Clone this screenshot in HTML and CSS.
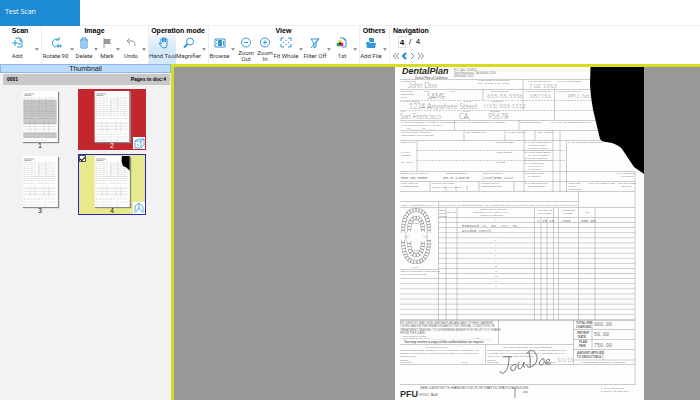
FILE: index.html
```html
<!DOCTYPE html>
<html lang="en">
<head>
<meta charset="utf-8">
<title>Test Scan</title>
<link rel="stylesheet" href="styles.css">
</head>
<body>
<svg class="defs" aria-hidden="true">
  <symbol id="sheet" viewBox="0 0 36 52">
    <path class="paper" d="M0 0h36v52H0z"/>
    <path class="ink-strong" d="M2 3h10M2 4.500h7"/>
    <path class="ink-dense" d="M1 7h33M1 9h14M17 9h16M1 11h33M1 13h12M16 13h18M1 15h33M1 17h20M23 17h10M1 19h33M1 23h33M1 25h33M1 28h12M16 28h17M1 44h20M23 44h10M1 47h18M22 47h12M1 50h25"/>
    <path class="ink-grid" d="M1 21h33M1 33h33M1 36h33M1 39h33M8 31v11M13 31v11M22 31v11M27 31v11M17 8v12M24 6v12"/>
  </symbol>
</svg>

<header class="titlebar"><h1 class="title">Test Scan</h1></header>

<nav class="toolbar" aria-label="Tools">
  <section class="group">
    <h2>Scan</h2>
    <div class="tools">
      <button class="tool w34"><svg viewBox="0 0 12 12"><path d="M1 6h6M4 3v6M5 2V1h4l2 2v7H6M9 1v3h2M7 7h3"/></svg><span>Add</span></button><button class="caret" aria-label="Add options"></button>
    </div>
  </section>
  <section class="group">
    <h2>Image</h2>
    <div class="tools">
      <button class="tool w27"><svg viewBox="0 0 12 12"><path d="M9 3A4 4 0 1 0 6 10M9 0v3H6M7 8h2v2H7zM10 8h1v2h-1z"/></svg><span>Rotate 90</span></button><button class="caret" aria-label="Rotate options"></button>
      <button class="tool w18"><svg viewBox="0 0 12 12"><path d="M2 3h8M4 3V1h4v2M3 3v8h6V3M5 4v6M7 4v6"/></svg><span>Delete</span></button><button class="caret" aria-label="Delete options"></button>
      <button class="tool w16 muted"><svg viewBox="0 0 12 12"><path class="fill" d="M3 2h7l-1 2 1 3H3z"/><path d="M3 1v10"/></svg><span>Mark</span></button><button class="caret" aria-label="Mark options"></button>
      <button class="tool w20 muted"><svg viewBox="0 0 12 12"><path d="M5 1L2 4l3 3M2 4h5q3 0 3 5"/></svg><span>Undo</span></button><button class="caret" aria-label="Undo options"></button>
    </div>
  </section>
  <section class="group">
    <h2>Operation mode</h2>
    <div class="tools">
      <button class="tool w27 selected"><svg viewBox="0 0 12 12"><path d="M4 7V2h1.500v3V1H7v4-4h1.500v4V2H10v6q0 3-3 3-2 0-3-2L2 6h1z"/></svg><span>Hand Tool</span></button>
      <button class="tool w25"><svg viewBox="0 0 12 12"><circle cx="7" cy="4.500" r="3.500"/><path class="bold" d="M4.500 7L1 10.500"/></svg><span>Magnifier</span></button><button class="caret" aria-label="Magnifier options"></button>
    </div>
  </section>
  <section class="group">
    <h2>View</h2>
    <div class="tools">
      <button class="tool w21"><svg viewBox="0 0 12 12"><path d="M1 2h10v8H1z"/><path class="fill" d="M4 3h4v6H4zM2 3h1v1H2zM2 6h1v1H2zM9 4h1v4H9z"/></svg><span>Browse</span></button><button class="caret" aria-label="Browse options"></button>
      <button class="tool w20"><svg viewBox="0 0 12 12"><circle cx="6" cy="5.500" r="4.500"/><path d="M4 5.500h4"/></svg><span>Zoom<br>Out</span></button>
      <button class="tool w18"><svg viewBox="0 0 12 12"><circle cx="6" cy="5.500" r="4.500"/><path d="M4 5.500h4M6 3.500v4"/></svg><span>Zoom<br>In</span></button>
      <button class="tool w24"><svg viewBox="0 0 12 12"><path d="M1 4V1h3M8 1h3v3M11 7v3H8M4 10H1V7M4 5.500H3M9 5.500H8M6 3v1M6 7v1"/></svg><span>Fit Whole</span></button><button class="caret" aria-label="Fit options"></button>
      <button class="tool w22"><svg viewBox="0 0 12 12"><path d="M2 2h8L7 6v4l-2 1V6zM10 1L2 11"/></svg><span>Filter Off</span></button><button class="caret" aria-label="Filter options"></button>
      <button class="tool w20"><svg viewBox="0 0 12 12"><path d="M4 1h4l2 2v7H6M8 1v2h2"/><circle class="dot-yellow" cx="4" cy="5" r="2"/><circle class="dot-cyan" cx="2.500" cy="7.500" r="2"/><circle class="dot-magenta" cx="5.500" cy="7.500" r="2"/><circle class="dot-black" cx="4" cy="6.500" r="1"/></svg><span>1st</span></button><button class="caret" aria-label="Page options"></button>
    </div>
  </section>
  <section class="group">
    <h2>Others</h2>
    <div class="tools">
      <button class="tool w22"><svg viewBox="0 0 12 12"><path class="fill" d="M1 5h3l1 1h6l-1 5H2z"/><path class="fill" d="M4 1h4l1 1v3H5L4 4z"/></svg><span>Add File</span></button><button class="caret" aria-label="Add file options"></button>
    </div>
  </section>
  <section class="group navigation">
    <h2>Navigation</h2>
    <div class="pager"><input aria-label="Page number" value="4"><span>/&nbsp; 4</span></div>
    <div class="steps">
      <button aria-label="First page"><svg viewBox="0 0 7 8"><path d="M3 1L0.500 4L3 7M6 1L3.500 4L6 7"/></svg></button>
      <button class="active" aria-label="Previous page"><svg viewBox="0 0 7 8"><path d="M5 1L2 4l3 3"/></svg></button>
      <button aria-label="Next page"><svg viewBox="0 0 7 8"><path d="M2 1l3 3-3 3"/></svg></button>
      <button aria-label="Last page"><svg viewBox="0 0 7 8"><path d="M1 1l2.500 3L1 7M4 1l2.500 3L4 7"/></svg></button>
    </div>
  </section>
</nav>

<main class="workspace">
  <aside class="thumbnails">
    <h2 class="panel-title">Thumbnail</h2>
    <div class="doc-head"><span>0001</span><span>Pages in doc:4</span></div>
    <div class="thumb-grid">
      <figure class="thumb">
        <svg class="mini dark" viewBox="0 0 36 52"><use href="#sheet"/><path class="shade" d="M1 9h34v25H1zM1 42h34v6H1z"/></svg>
        <figcaption>1</figcaption>
      </figure>
      <figure class="thumb flagged">
        <svg class="mini" viewBox="0 0 36 52"><use href="#sheet"/></svg>
        <figcaption>2</figcaption>
        <svg class="badge" viewBox="0 0 12 12"><path d="M2 4h6v7H2zM2 4l3-2h6L8 4M11 2v6L8 11M4 7l2 2"/></svg>
      </figure>
      <figure class="thumb">
        <svg class="mini" viewBox="0 0 36 52"><use href="#sheet"/></svg>
        <figcaption>3</figcaption>
      </figure>
      <figure class="thumb current">
        <input class="check" type="checkbox" aria-label="Select page 4" checked>
        <svg class="mini" viewBox="0 0 36 52"><use href="#sheet"/><path class="blob" d="M28 0h8v15l-3-3-4-2q-2-5-1-10z"/></svg>
        <figcaption>4</figcaption>
        <svg class="badge" viewBox="0 0 12 12"><path d="M2 11V4l4-3v5M10 11V5L6 1M3 10l3-4 3 4"/></svg>
      </figure>
    </div>
  </aside>

  <section class="viewer" aria-label="Page 4">
    <svg class="page" viewBox="395 67 249 333" preserveAspectRatio="xMidYMin meet">
      <defs>
        <pattern id="rows" x="400" y="217" width="10" height="5.100" patternUnits="userSpaceOnUse"><path class="rule" d="M0 .4h10"/></pattern>
      </defs>
      <path class="paper" d="M395 67h249v333H395z"/>

      <!-- form head -->
      <text class="logo" x="402" y="74">DentalPlan</text>
      <text class="t3 slant" x="415" y="79">Dental Plan of California</text>
      <g class="t3"><text x="454" y="71">P.O. Box 123456</text><text x="454" y="74">San Francisco, CA 94000-1234</text><text x="454" y="77">(800)000-1212</text></g>

      <!-- patient section rules -->
      <g class="rule">
        <path d="M400 79.500H590M400 89.500H591M400 120.500H597M400 130.500H601M400 140.500H635M400 171.500H635M400 181.500H635M400 191.500H635M400 201.500H578M400 207.500H635M483 89v11M523 79v31M554.500 89v31M454.500 120v10M519 120v10M417 141v30M464 130v11M505 130v11M535 130v11M553 130v62M560 130v62M566.500 141v51M524 130v62M430 181v10M479 181v10M514 181v10M578.500 191v16M635 172v213M446 186v5M456 186v5M467 186v5"/>
        <path class="dashed" d="M400 100.500H593M400 110.500H595M417 150.500h136M417 160.500h136M524 150.500h42M524 160.500h42"/>
      </g>
      <g class="t2">
        <text x="401" y="82">PATIENT NAME</text><text x="478" y="81">2. RELATIONSHIP TO EMPLOYEE</text><text x="478" y="84">SELF &#160; SPOUSE &#160; CHILD &#160; OTHER</text><text x="528" y="82">5. PATIENT BIRTHDATE</text><text x="557" y="82">6. IF FULL TIME STUDENT</text>
        <text x="401" y="92">EMPLOYEE</text><text x="401" y="95">SUBSCRIBER</text><text x="401" y="98">NAME</text><text x="424" y="92">FIRST</text><text x="450" y="92">LAST</text><text x="491" y="92">EMPLOYEE ID NO.</text><text x="525" y="92">9. EMPLOYER BIRTHDATE</text><text x="556" y="92">10. EMPLOYER (COMPANY)</text>
        <text x="401" y="102">MAILING ADDRESS</text><text x="463" y="102">APT. NO.</text><text x="492" y="102">PHONE NO.</text>
        <text x="401" y="112">CITY</text><text x="463" y="112">STATE</text><text x="490" y="112">ZIP CODE</text>
        <text x="401" y="123">IS PATIENT COVERED BY ANOTHER PLAN OF BENEFITS?</text><text x="401" y="126">(IF SO, COMPLETE ITEMS 12-A THRU 12-C)</text><text x="406" y="129">YES ________ &#160; &#160; NO ________</text><text x="456" y="123">12A. NAME AND ADDRESS OF DENTAL CARRIER(S)</text><text x="520" y="123">12B. GROUP NUMBER</text><text x="551" y="123">12C. NAME AND ADDRESS OF EMPLOYER</text>
        <text x="401" y="133">12D. EMPLOYEE NAME (FIRST)</text><text x="401" y="136">SUBSCRIBER NAME OF INSURED</text><text x="466" y="133">SOC. SECURITY NO.</text><text x="507" y="133">12F. RELATIONSHIP</text><text x="538" y="133">SELF &#160; SPOUSE</text>
        <text x="401" y="143">DENTIST NAME</text><text x="401" y="153">MAILING</text><text x="401" y="156">ADDRESS</text><text x="401" y="163">CITY, STATE</text><text x="496" y="143">LICENSE NUMBER</text><text x="496" y="153">PHONE NUMBER</text><text x="496" y="163">ZIP CODE</text>
        <text x="525" y="143">24. IS TREATMENT RESULT</text><text x="528" y="146">OF OCCUPATIONAL</text><text x="528" y="149">ILLNESS OR INJURY?</text><text x="525" y="153">25. IS TREATMENT RESULT</text><text x="528" y="156">OF AUTO ACCIDENT?</text><text x="525" y="159">26. OTHER ACCIDENT?</text><text x="525" y="164">27. IF PROSTHESIS,</text><text x="528" y="167">IS THIS INITIAL</text><text x="528" y="170">PLACEMENT?</text><text x="525" y="174">28. DATE OF PRIOR</text><text x="528" y="177">PLACEMENT</text><text x="525" y="184">29. IS TREATMENT FOR</text><text x="528" y="187">ORTHODONTICS?</text><text x="568" y="143">IF YES, ENTER BRIEF DESCRIPTION</text><text x="617" y="174">30. DATE OF PRIOR</text><text x="621" y="177">PLACEMENT</text><text x="568" y="184">IF SERVICES</text><text x="568" y="187">ALREADY</text><text x="568" y="190">COMMENCED</text><text x="588" y="184">DATE APPLIANCES PLACED</text><text x="618" y="184">MOS. TREATMENT</text><text x="621" y="187">REMAINING</text>
        <text x="401" y="174">DENTIST SOC. SEC. OR T.I.N.</text><text x="446" y="174">DENTIST LICENSE NO.</text><text x="483" y="174">DENTIST PHONE NO.</text><text x="401" y="184">FIRST VISIT DATE</text><text x="401" y="187">CURRENT SERIES</text><text x="432" y="184">PLACE OF TREATMENT</text><text x="432" y="188">OFFICE &#160; HOSP. &#160; ECF &#160; OTHER</text><text x="481" y="184">RADIOGRAPHS OR</text><text x="481" y="187">MODELS ENCLOSED?</text>
        <text x="401" y="206">IDENTIFY MISSING TEETH WITH "X"</text><text x="439" y="206">31. EXAMINATION AND TREATMENT RECORD - LIST IN ORDER FROM TOOTH NO. 1 THROUGH TOOTH NO. 32. USE CHARTING SYSTEM SHOWN.</text>
      </g>
      <g class="hand">
        <text x="408" y="88">John Doe</text><text x="427" y="99">SAME</text><text class="tight" x="487" y="98">655-55-5556</text><text class="tight" x="529" y="88">7 02 1963</text><text class="tight" x="530" y="98">987456</text><text class="tight" x="568" y="98">PFU Amer</text><text x="409" y="109">1234 Anywhere Street</text><text class="tight" x="484" y="108">(415) 555-1212</text><text x="400" y="119">San Francisco</text><text x="459" y="119">CA,</text><text x="488" y="119">95678</text>
      </g>
      <g class="typed">
        <text x="401" y="179">555-55-5555</text><text x="443" y="179">55-5-125675</text><text x="482" y="179">(415)555-1212</text>
      </g>

      <!-- treatment table -->
      <path fill="url(#rows)" d="M438 217h197v104H438z"/>
      <path fill="url(#rows)" d="M400 278h38v43h-38z"/>
      <path class="rule" d="M438.500 202v118M446 208v112M457 208v112M534.500 208v112M541 217v103M547 217v103M553.500 208v112M558.500 208v112M578.500 208v112M595 208v112M400 320.500h235M400 269.500h38"/>
      <g class="t2"><text x="439" y="211">TOOTH</text><text x="439" y="214">NO. OR</text><text x="439" y="217">LETTER</text><text x="447" y="213">SURFACE</text><text x="480" y="210">DESCRIPTION OF SERVICE</text><text x="473" y="213">(INCLUDING X-RAYS, PROPHYLAXIS,</text><text x="480" y="216">MATERIALS USED, ETC.)</text><text x="538" y="211">DATE SERVICE</text><text x="538" y="214">PERFORMED</text><text x="562" y="211">PROCEDURE</text><text x="564" y="214">NUMBER</text><text x="585" y="213">FEE</text><text x="401" y="272">REMARKS FOR UNUSUAL SERVICES OR</text><text x="401" y="275">NARRATIVE DESCRIPTION</text>
        <text x="495" y="221">1</text><text x="495" y="236">4</text><text x="495" y="241">5</text><text x="495" y="246">6</text><text x="495" y="251">7</text><text x="495" y="256">8</text><text x="495" y="262">9</text><text x="495" y="267">10</text><text x="495" y="272">11</text><text x="495" y="277">12</text><text x="495" y="282">13</text><text x="495" y="287">14</text>
      </g>
      <g class="typed"><text x="462" y="227">Removed #1, 16, #17, 32,</text><text x="462" y="232">wisdom teeth</text><text x="537" y="222">1</text><text x="542" y="222">25</text><text x="549" y="222">13</text><text x="561" y="222">2345</text><text x="581" y="222">600.00</text></g>

      <!-- tooth chart -->
      <g class="teeth">
        <path d="M403 233q0-23 13-23t13 23M403 240q0 22 13 22t13-22M409 232q0-14 7-14t7 14M409 241q0 14 7 14t7-14"/>
        <path class="gaps" d="M403 233q0-23 13-23t13 23M403 240q0 22 13 22t13-22M409 232q0-14 7-14t7 14M409 241q0 14 7 14t7-14"/>
      </g>
      <path class="rule" d="M406 232v9M427 232v9M404 237h5M423 237h5"/>
      <g class="t2"><text x="412" y="224">UPPER</text><text x="412" y="251">LOWER</text><text x="412" y="268">FACIAL</text></g>

      <!-- authorisation and totals -->
      <path class="rule" d="M498.500 320v24M400 344.500h173M485.500 345v19M400 364.500h235M573.500 320v44M592 320v30M603 350v10M573 329.500h62M573 339.500h62M573 349.500h62M573 360h62M400 384.500h235"/>
      <g class="t3"><text x="400" y="324">MY DENTIST MAY GIVE DENTALPLAN AND ANY OTHER CARRIER</text><text x="400" y="327">LISTED ABOVE INFORMATION ABOUT MY DENTAL CONDITION OR</text><text x="400" y="331">TREATMENT NEEDED TO DETERMINE BENEFITS FOR UP TO 3 YEARS</text><text x="400" y="334">FROM THIS DATE.</text></g>
      <g class="t2"><text x="403" y="337">SIGNATURE OF PATIENT</text><text x="403" y="339">(OR PARENT OR GUARDIAN)_______________________________________ DATE ___________</text><text x="425" y="348">AUTHORIZATION TO PAY</text><text x="400" y="351">THE TREATMENT LISTED IS NECESSARY IN MY PROFESSIONAL JUDGEMENT AND</text><text x="400" y="354">REQUEST AUTHORIZATION IN ACCORDANCE WITH DENTALPLAN PARTICIPATING</text><text x="400" y="357">DENTIST RULES.</text><text x="400" y="361">DENTIST</text><text x="400" y="363">SIGNATURE</text><text x="462" y="363">DATE</text>
        <text x="503" y="348">TREATMENT COMPLETED - PAYMENT REQUESTED</text><text x="487" y="351">THE TREATMENT LISTED WAS COMPLETED BY ME. I HEREBY REQUEST PAYMENT</text><text x="487" y="354">IN ACCORDANCE WITH THE DENTALPLAN RULES AND I AUTHORIZE THIS CLAIM</text><text x="487" y="357">AND STATE THAT THE CHARGES ARE CORRECT.</text><text x="487" y="361">DENTIST</text><text x="487" y="363">SIGNATURE</text><text x="550" y="363">DATE</text><text x="580" y="363">PAYMENT SUBJECT TO BENEFIT ALLOWANCES</text><text x="601" y="389">1 - CLAIM IN DUPLICATE</text><text x="601" y="392">2 - DETACH AND KEEP COPY</text></g>
      <text class="t3 strong" x="404" y="343">You may receive a copy of this authorization on request</text>
      <g class="t3 strong"><text x="576" y="324">TOTAL FEE</text><text x="576" y="328">CHARGED</text><text x="577" y="334">PATIENT</text><text x="578" y="338">RATE</text><text x="579" y="343">PLAN</text><text x="579" y="347">PAID</text><text x="577" y="354">AMOUNT APPLIED</text><text x="577" y="358">TO DEDUCTIBLE</text></g>
      <g class="typed large"><text x="594" y="326">000.00</text><text x="594" y="336">50.00</text><text x="594" y="347">750.00</text></g>
      <path class="signature" d="M503 357q5-1 9 0M509 357q0 11-4 15-4 3-5-1M513 365q-4 2-2 5 4 2 5-3 1-4-3-2M519 362q-2 6 0 7 3 0 5-7-1 6 1 5M529 352q2 8 1 15M526 354q7-8 11 2 1 8-6 11-5 1-4-3M542 359q-5 5-1 6 4 0 3-6-1-1-2 0M546 363q5-1 3-4-4 1-3 5 2 1 5-1"/>
      <text class="hand small" x="557" y="362">5/1/13</text>
      <text class="brand" x="400" y="397">PFU</text>
      <text class="t4" x="420" y="389">SEE DENTIST'S HANDBOOK FOR PARTICIPATION RULES</text>
      <text class="t3" x="419" y="396">MSG02</text><text class="t3 strong" x="431" y="396">No.5</text>
      <path class="folio" d="M512 388h3v10M523 392h5"/>

      <path class="blob" d="M590.500 67L590 84Q591 103 595 118L600 139Q602 142 606 142L612 143Q620 146 622 149L628 158L634 167L644 174V67z"/>
    </svg>
  </section>
</main>
</body>
</html>
```

FILE: styles.css
```css
* { box-sizing: border-box; }

body {
  margin: 0;
  height: 100vh;
  display: flex;
  flex-direction: column;
  overflow: hidden;
  background: #fff;
  color: #222;
  font-family: Roboto, "Liberation Sans", sans-serif;
  font-size: 6px;
  line-height: 6px;
}

h1, h2, figure { margin: 0; }
button, input { font: inherit; color: inherit; padding: 0; margin: 0; border: 0; background: none; }
.defs { position: absolute; width: 0; height: 0; }

.titlebar { height: 26px; flex: none; border-bottom: 1px solid #eee; }
.title {
  width: 80px;
  height: 26px;
  padding-left: 5px;
  background: #1d8bd3;
  color: #fff;
  font: 7px/24px "Open Sans", sans-serif;
}

/* toolbar */
.toolbar { display: flex; flex: none; height: 38px; }
.group { padding-right: 1px; border-right: 1px solid #eee; }
.group h2 { height: 9px; font-family: "Liberation Sans", sans-serif; font-size: 7px; line-height: 10px; text-align: center; color: #000; white-space: nowrap; }
.tools { display: flex; height: 29px; }
.tool {
  display: flex;
  flex-direction: column;
  align-items: center;
  padding-top: 2px;
  color: #333;
  white-space: nowrap;
}
.tool span { display: flex; flex-direction: column; justify-content: center; height: 14px; line-height: 6px; text-align: center; }
.tool svg { width: 12px; height: 12px; flex: none; fill: none; stroke: #3298d8; stroke-width: 1; }
.tool .fill { fill: #3298d8; stroke: none; }
.tool .bold { stroke-width: 2; }
.tool .dot-yellow { fill: #f7d51d; stroke: none; }
.tool .dot-cyan { fill: #16b45a; stroke: none; }
.tool .dot-magenta { fill: #e8208c; stroke: none; }
.tool .dot-black { fill: #111; stroke: none; }
.muted svg { stroke: #999; }
.muted svg .fill { fill: #999; }
.selected { background: linear-gradient(#f1f3fc, #d3eaf9 50%, #d3eaf9); }
.w16 { width: 16px; }
.w18 { width: 18px; }
.w20 { width: 20px; }
.w21 { width: 21px; }
.w22 { width: 22px; }
.w24 { width: 24px; }
.w25 { width: 25px; }
.w27 { width: 27px; }
.w34 { width: 34px; }
.caret { width: 6px; display: flex; align-items: center; justify-content: center; }
.caret::before { content: ""; border: 2px solid transparent; border-top: 3px solid #999; border-bottom: 0; }

.navigation { padding-left: 3px; border-right: 0; }
.pager { display: flex; align-items: center; gap: 3px; height: 14px; padding-left: 5px; font-family: "Liberation Sans", sans-serif; font-size: 8px; color: #000; }
.pager input { width: 8px; height: 12px; border: 1px solid #e2e2e2; font-weight: bold; text-align: center; }
.steps { display: flex; padding-top: 3px; }
.steps button { width: 8px; height: 8px; }
.steps svg { display: block; width: 7px; height: 8px; fill: none; stroke: #888; }
.steps .active svg { stroke: #1d8bd3; stroke-width: 2; }

/* thumbnail panel */
.workspace { display: flex; flex: 1; min-height: 0; }
.thumbnails { width: 171px; flex: none; background: #f2f2f4; font-family: "Liberation Sans", sans-serif; }
.panel-title {
  height: 9px;
  border: 1px solid #8db9e8;
  background: #bbdcfc;
  color: #111;
  font-size: 7px;
  font-weight: normal;
  line-height: 7px;
  text-align: center;
}
.doc-head {
  display: flex;
  justify-content: space-between;
  margin: 1px 1px 4px 3px;
  padding: 0 4px;
  background: #c8c8c8;
  color: #000;
  font-size: 5px;
  font-weight: bold;
  line-height: 11px;
}
.thumb-grid { display: grid; grid-template-columns: 68px 68px; column-gap: 4px; row-gap: 4px; padding-left: 6px; }
.thumb {
  position: relative;
  height: 61px;
  padding-top: 2px;
  display: flex;
  flex-direction: column;
  align-items: center;
  font-size: 7px;
  color: #111;
}
.mini { width: 36px; height: 51px; flex: none; box-shadow: 1px 1px 1px #888; }
.thumb figcaption { line-height: 7px; }
.flagged { background: #c1272d; color: #fff; }
.current { background: #e8e98d; }
.current { outline: 1px solid #2828b4; outline-offset: -1px; }
.badge { position: absolute; right: 1px; bottom: 1px; width: 12px; height: 12px; background: #fff; fill: none; stroke: #58a9dc; stroke-width: 1; }
.check { position: absolute; left: 1px; top: 1px; width: 7px; height: 7px; appearance: none; border: 1px solid #555; background: #fff; }
.check::before { content: ""; display: block; width: 4px; height: 2px; margin-top: 1px; border: solid #000; border-width: 0 0 1px 1px; transform: rotate(-45deg); }

.paper { fill: #fdfdfd; }
.blob { fill: #000; }
.ink-strong { stroke: #aaa; stroke-width: 1; }
.ink-dense { stroke: #e0e2e0; stroke-width: 1; stroke-dasharray: 3 1 2 1; }
.ink-grid { stroke: #e0e0e0; stroke-width: 1; }
.dark .shade { fill: #777; fill-opacity: .4; }

/* page viewer */
.viewer {
  flex: 1;
  min-width: 0;
  display: flex;
  justify-content: flex-end;
  padding-right: 56px;
  border: solid #d6dd20;
  border-width: 3px 0 0 3px;
  background: #989898;
}
.page { height: 100%; width: auto; font-family: "Liberation Sans", sans-serif; }
.page text { fill: #777; }
.rule { fill: none; stroke: #999; stroke-width: .5; }
.dashed { stroke-dasharray: 2 1; }
.page .t2 text { font-size: 2px; }
.page .t3 { font-size: 3px; }
.page .t4 { font-size: 4px; fill: #666; }
.page .t3.strong, .page .strong text { font-weight: bold; fill: #666; }
.page .slant { font-style: italic; fill: #444; }
.page .logo { font-size: 9px; font-weight: bold; font-style: italic; fill: #222; }
.page .hand text, .page .hand { font-family: Lato, sans-serif; font-weight: 300; font-size: 7px; fill: #777; }
.page .hand .tight { font-size: 6px; }
.page .hand.small { font-size: 5px; }
.page .typed { font-family: "Liberation Mono", monospace; font-size: 4px; }
.page .typed.large { font-size: 5px; }
.page .typed text { fill: #777; }
.page .brand { font-size: 9px; font-weight: bold; fill: #333; }
.teeth path { fill: none; stroke: #999; stroke-width: 4; }
.teeth path.gaps { stroke: #fdfdfd; stroke-width: 3; stroke-dasharray: 2 1; }
.signature { fill: none; stroke: #555; stroke-width: .8; }
.folio { fill: none; stroke: #888; stroke-width: 1; }
```
